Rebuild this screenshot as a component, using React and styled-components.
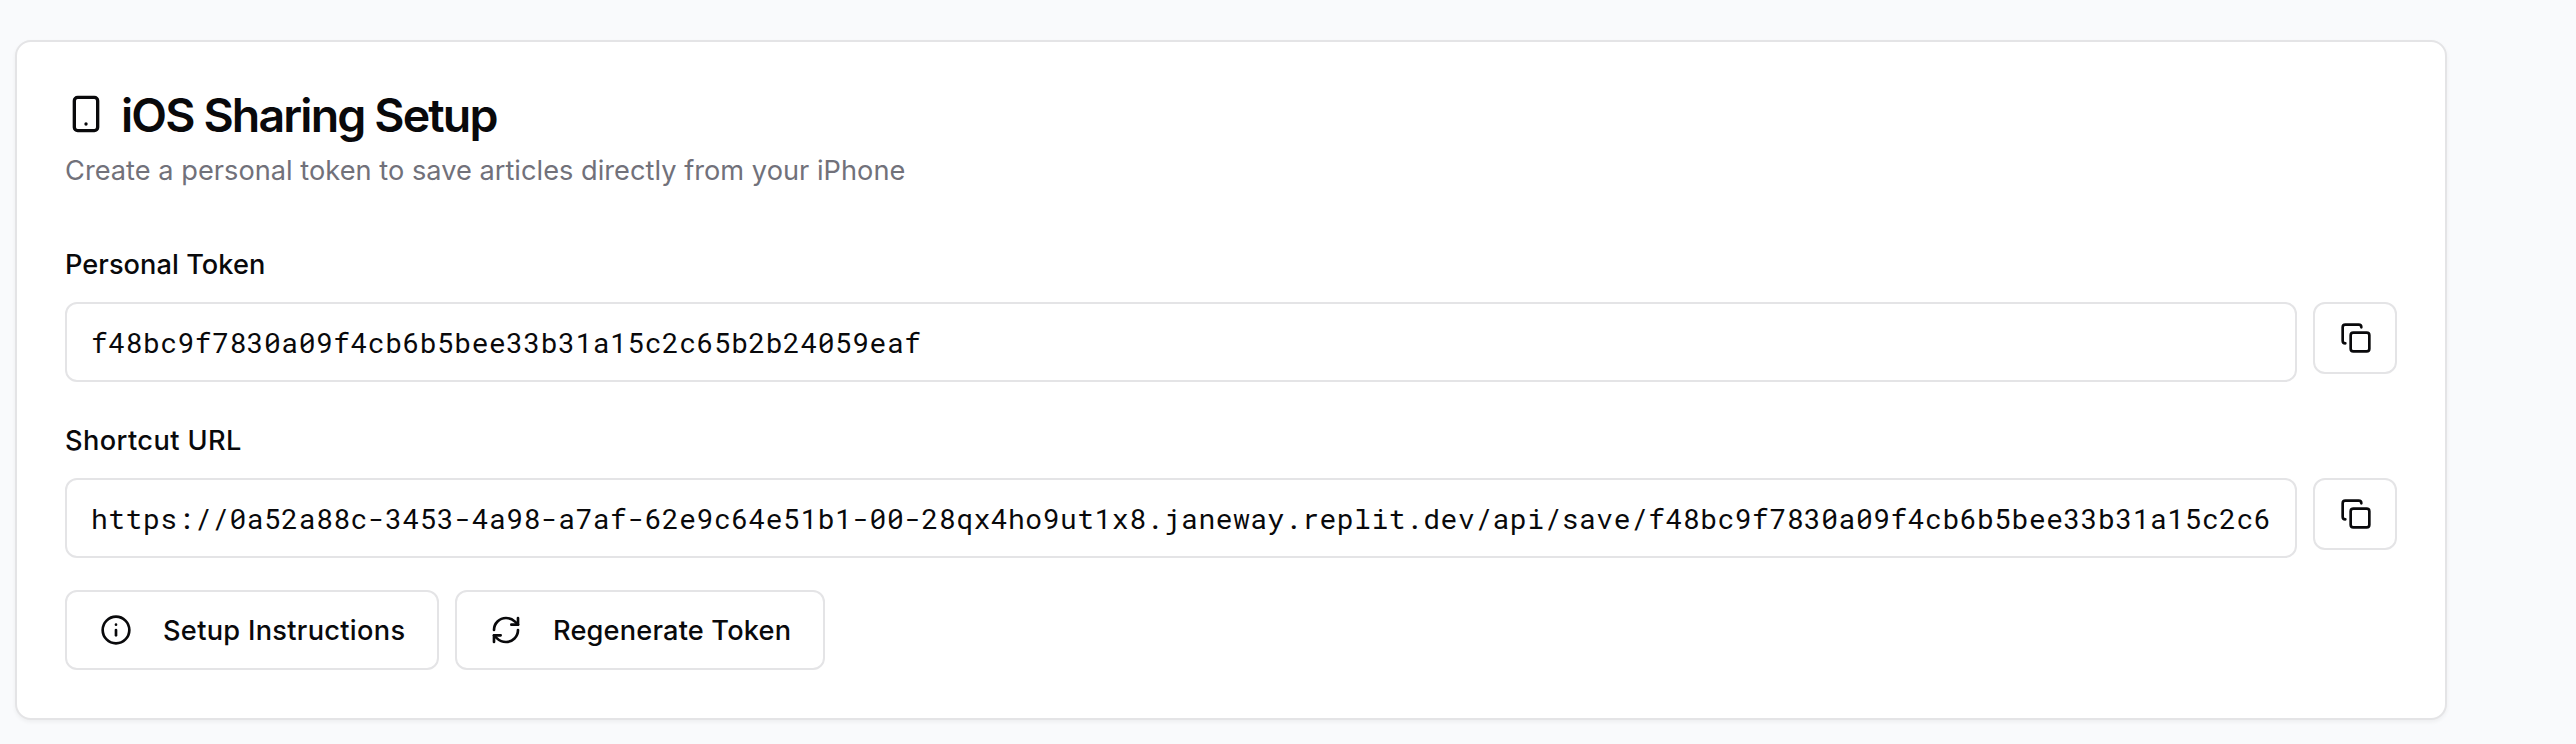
import React from "react";
import styled, { createGlobalStyle } from "styled-components";
import { Copy, Info, RefreshCw, Smartphone } from "lucide-react";

const GlobalStyle = createGlobalStyle`
  *, *::before, *::after { box-sizing: border-box; }
  body {
    margin: 0;
    background: #f9fafc;
    color: #09090b;
    font-family: Inter, "Liberation Sans", sans-serif;
    -webkit-font-smoothing: antialiased;
  }
`;

const Page = styled.main`
  min-height: 744px;
  padding: 40px 129px 24px 15px;
`;

const Card = styled.section`
  width: 2432px;
  background: #fff;
  border: 2px solid #e4e4e6;
  border-radius: 16px;
  box-shadow: 0 2px 4px rgba(0, 0, 0, 0.05);
`;

const CardHeader = styled.header`
  display: flex;
  flex-direction: column;
  gap: 12px;
  padding: 48px;
`;

const Title = styled.h2`
  display: flex;
  align-items: center;
  gap: 15px;
  height: 48px;
  margin: 0;
  padding-left: 1px;
  font-size: 46.5px;
  line-height: 48px;
  font-weight: 600;
  letter-spacing: -1.86px;

  span { padding-top: 2px; }
`;

const Description = styled.p`
  margin: 0;
  color: #71717a;
  font-size: 27.2px;
  line-height: 41px;
  height: 40px;
  letter-spacing: 0.02px;
`;

const CardBody = styled.div`
  display: flex;
  flex-direction: column;
  gap: 32px;
  padding: 0 48px 48px;
`;

const Field = styled.div`
  display: flex;
  flex-direction: column;
  gap: 16px;
`;

const Label = styled.label`
  height: 48px;
  padding-top: 3px;
  font-size: 27.2px;
  line-height: 48px;
  font-weight: 500;
  letter-spacing: ${(p) => p.$tracking}px;
`;

const FieldRow = styled.div`
  display: flex;
  align-items: flex-start;
  gap: 16px;
`;

const TokenInput = styled.input`
  flex: 1;
  min-width: 0;
  height: 80px;
  padding: 0 0 0 24px;
  border: 2px solid #e4e4e6;
  border-radius: 12px;
  outline: none;
  background: #fff;
  color: #09090b;
  font-family: "Roboto Mono", "DejaVu Sans Mono", monospace;
  font-size: 28px;
  letter-spacing: 0.5px;
`;

const Button = styled.button`
  display: inline-flex;
  align-items: center;
  justify-content: flex-start;
  gap: 31px;
  width: ${(p) => p.$width}px;
  height: ${(p) => (p.$compact ? 72 : 80)}px;
  padding: 0 0 0 ${(p) => (p.$compact ? 25 : 33)}px;
  border: 2px solid #e4e4e6;
  border-radius: 12px;
  background: #fff;
  color: #09090b;
  font-family: inherit;
  font-size: 27.2px;
  line-height: 40px;
  font-weight: 500;
  letter-spacing: ${(p) => p.$tracking || 0}px;
  white-space: nowrap;

  svg { flex: none; }
  span { padding-top: 1px; }
`;

const Actions = styled.div`
  display: flex;
  gap: 16px;
`;

const fields = [
  {
    id: "token",
    label: "Personal Token",
    tracking: 0.05,
    value: "f48bc9f7830a09f4cb6b5bee33b31a15c2c65b2b24059eaf",
  },
  {
    id: "url",
    label: "Shortcut URL",
    tracking: 0.4,
    value:
      "https://0a52a88c-3453-4a98-a7af-62e9c64e51b1-00-28qx4ho9ut1x8.janeway.replit.dev/api/save/f48bc9f7830a09f4cb6b5bee33b31a15c2c6",
  },
];

export default function App() {
  return (
    <>
      <GlobalStyle />
      <Page>
        <Card>
          <CardHeader>
            <Title>
              <Smartphone size={40} />
              <span>iOS Sharing Setup</span>
            </Title>
            <Description>
              Create a personal token to save articles directly from your iPhone
            </Description>
          </CardHeader>
          <CardBody>
            {fields.map((f) => (
              <Field key={f.id}>
                <Label htmlFor={f.id} $tracking={f.tracking}>{f.label}</Label>
                <FieldRow>
                  <TokenInput id={f.id} readOnly value={f.value} />
                  <Button $compact $width={84} aria-label="Copy">
                    <Copy size={32} />
                  </Button>
                </FieldRow>
              </Field>
            ))}
            <Actions>
              <Button $width={374} $tracking={0.3}>
                <Info size={32} />
                <span>Setup Instructions</span>
              </Button>
              <Button $width={370} $tracking={0.18}>
                <RefreshCw size={32} />
                <span>Regenerate Token</span>
              </Button>
            </Actions>
          </CardBody>
        </Card>
      </Page>
    </>
  );
}
